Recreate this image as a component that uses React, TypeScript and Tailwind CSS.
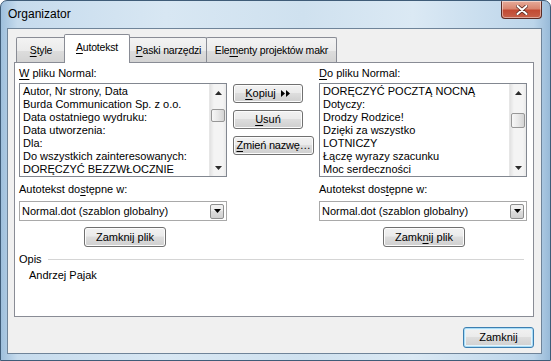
import React from 'react';

const leftItems = [
  'Autor, Nr strony, Data',
  'Burda Communication Sp. z o.o.',
  'Data ostatniego wydruku:',
  'Data utworzenia:',
  'Dla:',
  'Do wszystkich zainteresowanych:',
  'DORĘCZYĆ BEZZWŁOCZNIE',
];

const rightItems = [
  'DORĘCZYĆ POCZTĄ NOCNĄ',
  'Dotyczy:',
  'Drodzy Rodzice!',
  'Dzięki za wszystko',
  'LOTNICZY',
  'Łączę wyrazy szacunku',
  'Moc serdeczności',
];

const U = ({ children }: { children: React.ReactNode }) => (
  <span className="underline decoration-1 underline-offset-[2px]">{children}</span>
);

const Arrow = ({ dir }: { dir: 'up' | 'down' }) => (
  <svg width="7" height="4" viewBox="0 0 7 4">
    {dir === 'up' ? <path d="M0 4 L3.5 0 L7 4 Z" fill="#2b2b2b" /> : <path d="M0 0 L7 0 L3.5 4 Z" fill="#2b2b2b" />}
  </svg>
);

const ScrollBar = ({ thumbTop, thumbH }: { thumbTop: number; thumbH: number }) => (
  <div className="w-[17px] h-full flex flex-col bg-[linear-gradient(90deg,#e2e2e2,#f4f4f4_25%,#f4f4f4_80%,#e9e9e9)] border-l border-[#e6e6e6]">
    <div className="h-[17px] flex items-center justify-center">
      <Arrow dir="up" />
    </div>
    <div className="flex-1 flex flex-col">
      <div
        className="mx-[1px] rounded-[2px] border border-[#979797] bg-[linear-gradient(90deg,#f7f7f7,#e8e8e8_50%,#d4d4d4)]"
        style={{ marginTop: thumbTop, height: thumbH }}
      />
    </div>
    <div className="h-[17px] flex items-center justify-center">
      <Arrow dir="down" />
    </div>
  </div>
);

const ListBox = ({ items, thumbTop, thumbH }: { items: string[]; thumbTop: number; thumbH: number }) => (
  <div className="h-[94px] border border-[#828790] bg-white flex">
    <div className="flex-1 pt-[1px] pl-[3px] overflow-hidden">
      {items.map((it) => (
        <div key={it} className="leading-[13px] whitespace-nowrap">
          {it}
        </div>
      ))}
    </div>
    <ScrollBar thumbTop={thumbTop} thumbH={thumbH} />
  </div>
);

const Button = ({ children, className = '' }: { children: React.ReactNode; className?: string }) => (
  <div
    className={`flex items-center justify-center rounded-[3px] border border-[#707070] bg-[linear-gradient(180deg,#f2f2f2,#ebebeb_45%,#dddddd_50%,#cfcfcf)] shadow-[inset_0_0_0_1px_#fcfcfc] ${className}`}
  >
    {children}
  </div>
);

const Combo = () => (
  <div className="h-[20px] border border-[#a9a9a9] bg-white flex items-center pl-[2px] pr-[2px]">
    <span className="flex-1 whitespace-nowrap">Normal.dot (szablon globalny)</span>
    <div className="w-[14px] h-[15px] rounded-[2px] border border-[#8e8f8f] bg-[linear-gradient(180deg,#f2f2f2,#ebebeb_45%,#dddddd_50%,#cfcfcf)] flex items-center justify-center">
      <svg width="7" height="4" viewBox="0 0 7 4">
        <path d="M0 0 L7 0 L3.5 4 Z" fill="#000" />
      </svg>
    </div>
  </div>
);

const tabBase =
  'h-[26px] flex items-center justify-center border border-b-0 border-[#898c95] rounded-t-[2px] bg-[linear-gradient(180deg,#f3f3f3,#ebebeb_50%,#dddddd_51%,#d2d2d2)] whitespace-nowrap text-[10.5px] tracking-[-0.2px]';

export default function App() {
  return (
    <div className="w-[551px] h-[361px] overflow-hidden font-['Liberation_Sans',Arial,sans-serif] text-[11px] text-black">
      <div className="w-[551px] h-[361px] flex flex-col rounded-t-[7px] border border-[#3f5c78] bg-[linear-gradient(90deg,#9ebfdc,#c6dbed_3%,#d8e7f3_30%,#cfe1ef_55%,#dbe9f4_75%,#bcd5ea_97%,#98bad8)]">
        {/* title bar */}
        <div className="h-[27px] flex items-start justify-between">
          <div className="pl-[7px] pt-[6px] text-[12px] leading-[14px] text-black">Organizator</div>
          <div className="mr-[8px] w-[41px] h-[18px] rounded-b-[4px] rounded-t-[1px] border border-t-0 border-[#5a2a24] bg-[linear-gradient(180deg,#e6ab9a,#d98670_45%,#c24a33_55%,#c7614a)] shadow-[inset_0_0_0_1px_rgba(255,255,255,0.45)] flex items-center justify-center">
            <svg width="12" height="10" viewBox="0 0 12 10">
              <path d="M1.5 1 L10.5 9 M10.5 1 L1.5 9" stroke="#5d2b22" strokeWidth="3.6" strokeLinecap="round" />
              <path d="M1.5 1 L10.5 9 M10.5 1 L1.5 9" stroke="#ffffff" strokeWidth="2" strokeLinecap="round" />
            </svg>
          </div>
        </div>

        {/* client area */}
        <div className="ml-[6px] mr-[8px] h-[326px] border border-[#6f8499] bg-[#f0f0f0] flex flex-col">
          {/* tabs */}
          <div className="h-[34px] flex items-end pl-[8px]">
            <div className={`${tabBase} w-[50px]`}>
              <span>
                <U>S</U>tyle
              </span>
            </div>
            <div className="relative z-10 -mx-[2px] w-[66px] h-[29px] flex items-center justify-center border border-b-0 border-[#898c95] rounded-t-[2px] bg-white pb-[2px] text-[10.5px] tracking-[-0.2px]">
              <span>
                <U>A</U>utotekst
              </span>
            </div>
            <div className={`${tabBase} w-[79px] pl-[2px]`}>
              <span>
                <U>P</U>aski narzędzi
              </span>
            </div>
            <div className={`${tabBase} -ml-px w-[131px]`}>
              <span>
                Ele<U>m</U>enty projektów makr
              </span>
            </div>
          </div>

          {/* panel */}
          <div className="-mt-px ml-[6px] w-[520px] h-[255px] border border-[#898c95] bg-white pl-[4px] pr-[5px] pt-[4px] flex flex-col">
            <div className="flex">
              <div className="w-[208px]">
                <div className="leading-[13px]">
                  <U>W</U> pliku Normal:
                </div>
                <div className="mt-[3px]">
                  <ListBox items={leftItems} thumbTop={8} thumbH={13} />
                </div>
              </div>
              <div className="ml-[6px] w-[81px] pt-[17px] flex flex-col gap-[7px]">
                <Button className="w-[70px] h-[19px] gap-[5px]">
                  <span>
                    <U>K</U>opiuj
                  </span>
                  <svg width="10" height="7" viewBox="0 0 10 7">
                    <path d="M0 0 L4 3.5 L0 7 Z M5 0 L9 3.5 L5 7 Z" fill="#000" />
                  </svg>
                </Button>
                <Button className="w-[70px] h-[19px]">
                  <span>
                    <U>U</U>suń
                  </span>
                </Button>
                <Button className="w-[81px] h-[19px] tracking-[-0.2px]">
                  <span>
                    <U>Z</U>mień nazwę…
                  </span>
                </Button>
              </div>
              <div className="ml-[5px] w-[208px]">
                <div className="leading-[13px]">
                  <U>D</U>o pliku Normal:
                </div>
                <div className="mt-[3px]">
                  <ListBox items={rightItems} thumbTop={12} thumbH={15} />
                </div>
              </div>
            </div>

            <div className="flex mt-[6px]">
              <div className="w-[208px]">
                <div className="leading-[13px]">
                  Autotekst do<U>s</U>tępne w:
                </div>
                <div className="mt-[5px]">
                  <Combo />
                </div>
                <div className="mt-[6px] flex justify-center pl-[4px]">
                  <Button className="w-[82px] h-[20px]">
                    <span>Zamknij plik</span>
                  </Button>
                </div>
              </div>
              <div className="ml-[92px] w-[208px]">
                <div className="leading-[13px]">
                  Autotekst dos<U>t</U>ępne w:
                </div>
                <div className="mt-[5px]">
                  <Combo />
                </div>
                <div className="mt-[6px] flex justify-center pl-[2px]">
                  <Button className="w-[82px] h-[20px]">
                    <span>
                      Zamk<U>n</U>ij plik
                    </span>
                  </Button>
                </div>
              </div>
            </div>

            <div className="mt-[6px] flex items-center">
              <span className="leading-[13px]">Opis</span>
              <div className="ml-[6px] mr-[4px] flex-1 border-t border-[#d5d5d5]" />
            </div>
            <div className="mt-[3px] pl-[10px] leading-[13px]">Andrzej Pajak</div>
          </div>

          {/* footer */}
          <div className="mt-[10px] flex justify-end pr-[7px]">
            <div className="w-[71px] h-[21px] rounded-[3px] border border-[#3c7fb1] bg-[linear-gradient(180deg,#f2f2f2,#ebebeb_45%,#dddddd_50%,#cfcfcf)] shadow-[inset_0_0_0_1px_#a9dcf6,inset_0_0_0_2px_#e4f4fc] flex items-center justify-center">
              <span>Zamknij</span>
            </div>
          </div>
        </div>
      </div>
    </div>
  );
}
